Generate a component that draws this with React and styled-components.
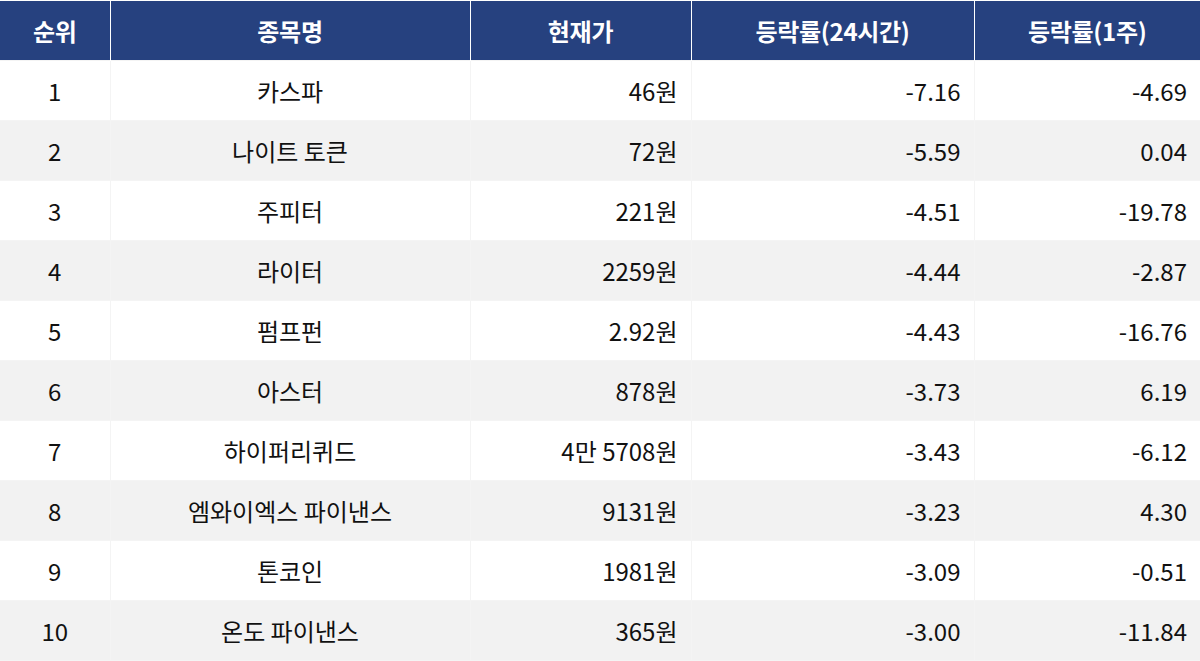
import React from "react";
import styled, { createGlobalStyle } from "styled-components";

const rows = [
  ["1", "카스파", "46원", "-7.16", "-4.69"],
  ["2", "나이트 토큰", "72원", "-5.59", "0.04"],
  ["3", "주피터", "221원", "-4.51", "-19.78"],
  ["4", "라이터", "2259원", "-4.44", "-2.87"],
  ["5", "펌프펀", "2.92원", "-4.43", "-16.76"],
  ["6", "아스터", "878원", "-3.73", "6.19"],
  ["7", "하이퍼리퀴드", "4만 5708원", "-3.43", "-6.12"],
  ["8", "엠와이엑스 파이낸스", "9131원", "-3.23", "4.30"],
  ["9", "톤코인", "1981원", "-3.09", "-0.51"],
  ["10", "온도 파이낸스", "365원", "-3.00", "-11.84"],
];

const columns = [
  { label: "순위", width: 110, align: "center" },
  { label: "종목명", width: 360, align: "center" },
  { label: "현재가", width: 221, align: "right" },
  { label: "등락률(24시간)", width: 283, align: "right" },
  { label: "등락률(1주)", width: 226, align: "right" },
];

export default function App() {
  return (
    <>
      <GlobalStyle />
      <Table>
        <colgroup>
          {columns.map((c) => (
            <col key={c.label} style={{ width: c.width }} />
          ))}
        </colgroup>
        <thead>
          <tr>
            {columns.map((c) => (
              <HeadCell key={c.label}>{c.label}</HeadCell>
            ))}
          </tr>
        </thead>
        <tbody>
          {rows.map((r, i) => (
            <Row key={r[0]} $striped={i % 2 === 1}>
              {r.map((v, j) => (
                <Cell key={j} $align={columns[j].align}>
                  {v}
                </Cell>
              ))}
            </Row>
          ))}
        </tbody>
      </Table>
    </>
  );
}

const GlobalStyle = createGlobalStyle`
  body {
    margin: 0;
    background: #fff;
    font-family: "Noto Sans CJK KR", "Noto Sans", sans-serif;
  }
`;

const Table = styled.table`
  width: 1200px;
  table-layout: fixed;
  border-collapse: collapse;
  border-top: 1px solid #fff;
`;

const HeadCell = styled.th`
  height: 59px;
  padding: 0 14px;
  background: #26417f;
  color: #fff;
  font-size: 24px;
  font-weight: 700;
  letter-spacing: -0.3px;
  text-align: center;
  border-left: 1px solid #fff;
  border-right: 1px solid #fff;
  &:first-child { border-left: none; }
  &:last-child { border-right: none; }
`;

const Row = styled.tr`
  background: ${(p) => (p.$striped ? "#f2f2f2" : "#fff")};
`;

const Cell = styled.td`
  height: 59px;
  padding: 0 13px;
  color: #111;
  font-size: 24px;
  text-align: ${(p) => p.$align};
  border: 1px solid #f4f4f4;
  &:first-child { border-left: none; }
  &:last-child { border-right: none; }
`;
